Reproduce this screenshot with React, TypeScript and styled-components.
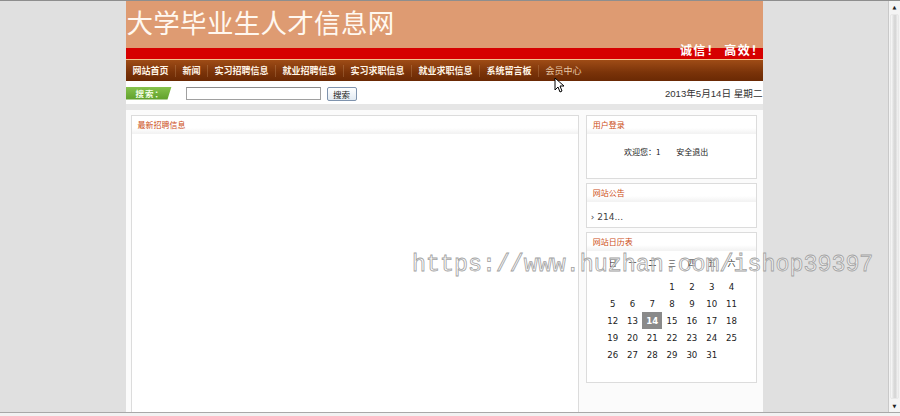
import React from "react";
import styled, { createGlobalStyle } from "styled-components";

const Global = createGlobalStyle`
  html, body { margin: 0; padding: 0; background: #e0e0e0; overflow: hidden; }
  body { font-family: "Noto Sans CJK SC", "Liberation Sans", sans-serif; }
  * { box-sizing: border-box; }
`;

const Frame = styled.div`
  position: relative;
  height: 416px;
  display: flex;
  flex-direction: column;
  border-top: 1px solid #8e8e8e;
`;

const Screen = styled.div`
  flex: 1;
  display: flex;
  min-height: 0;
`;

const Viewport = styled.div`
  flex: 1;
  display: flex;
  justify-content: center;
`;

const ScrollBar = styled.div`
  width: 12px;
  display: flex;
  flex-direction: column;
  background: #f4f4f4;
  border-left: 1px solid #c9c9c9;
`;

const ScrollArrow = styled.div`
  height: 12px;
  display: flex;
  align-items: center;
  justify-content: center;
  font-size: 5px;
  color: #222;
  font-family: "DejaVu Sans", sans-serif;
`;

const ScrollThumb = styled.div`
  flex: 1;
  margin: 1px 1px;
  background: linear-gradient(to right, #fafafa, #dcdcdc 40%, #d4d4d4 60%, #f4f4f4);
  border: 1px solid #e8e8e8;
  border-radius: 2px;
`;

const BottomEdge = styled.div`
  height: 4px;
  border-top: 1px solid #a8a8a8;
  background: #f2f2f2;
`;

const Container = styled.div`
  width: 637px;
  display: flex;
  flex-direction: column;
`;

const Header = styled.div`
  height: 58px;
  background: linear-gradient(to bottom, #de9b72 0, #de9b72 47px, #d60000 47px, #d60000 58px);
  display: flex;
  flex-direction: column;
  justify-content: space-between;
`;

const SiteTitle = styled.div`
  padding: 5px 0 0 1px;
  font-size: 26.5px;
  line-height: 32px;
  color: #fff8f0;
  letter-spacing: 0.3px;
`;

const Slogan = styled.div`
  align-self: flex-end;
  padding: 0 0 1px 0;
  margin-right: -2px;
  font-size: 12px;
  line-height: 16px;
  font-weight: bold;
  color: #fff;
  letter-spacing: 1.4px;
`;

const NavBar = styled.nav`
  height: 22px;
  padding-left: 0.5px;
  border-top: 1px solid #f2c48e;
  background: linear-gradient(to bottom, #9f4c16, #7a3309 60%, #6a2904);
  display: flex;
  align-items: center;
`;

const NavItem = styled.span<{ $light?: boolean; $first?: boolean }>`
  padding: 0 6.5px;
  font-size: 9px;
  line-height: 12px;
  font-weight: ${(p) => (p.$light ? "normal" : "bold")};
  color: ${(p) => (p.$light ? "#e9c9a8" : "#fff4e6")};
  border-left: ${(p) => (p.$first ? "none" : "1px solid rgba(255,220,180,0.18)")};
`;

const SearchRow = styled.div`
  height: 23px;
  background: #fff;
  display: flex;
  align-items: center;
`;

const SearchTag = styled.div`
  width: 46px;
  height: 13px;
  margin-top: 1px;
  background: linear-gradient(to bottom, #86c24c, #5f9f2a);
  clip-path: polygon(0 0, 100% 0, calc(100% - 4px) 100%, 0 100%);
  color: #f4ffe8;
  font-size: 8.5px;
  font-weight: bold;
  line-height: 13px;
  padding-left: 10px;
  letter-spacing: 1px;
`;

const SearchInput = styled.div`
  width: 135px;
  height: 13px;
  margin: 2px 0 0 14px;
  border: 1px solid #a0a0a0;
  border-top-color: #8a8a8a;
  background: #fff;
`;

const SearchButton = styled.div`
  width: 30px;
  height: 14px;
  margin: 3px 0 0 6px;
  border: 1px solid #7f93ad;
  border-radius: 2px;
  background: linear-gradient(to bottom, #ffffff, #e2eaf2);
  font-size: 8.5px;
  line-height: 12px;
  text-align: center;
  color: #1a1a1a;
`;

const DateText = styled.div`
  margin-left: auto;
  font-size: 9.6px;
  color: #333;
  font-family: "Liberation Sans", "Noto Sans CJK SC", sans-serif;
`;

const Body = styled.div`
  flex: 1;
  min-height: 0;
  background: #fbfbfb;
  border-top: 6px solid #e6e6e6;
  padding: 5px 6px 0 5px;
  display: flex;
  gap: 7px;
`;

const Panel = styled.div<{ $h?: number }>`
  background: #fff;
  border: 1px solid #dcdcdc;
  display: flex;
  flex-direction: column;
  ${(p) => (p.$h ? `height: ${p.$h}px;` : "")}
`;

const MainPanel = styled(Panel)`
  width: 449px;
  align-self: stretch;
  border-bottom: none;
`;

const SideColumn = styled.div`
  width: 171px;
  display: flex;
  flex-direction: column;
  gap: 4px;
`;

const PanelTitle = styled.div`
  height: 18px;
  padding-left: 6px;
  font-size: 8px;
  line-height: 17px;
  color: #cc4d16;
  background: linear-gradient(to bottom, #ffffff 0, #ffffff 12px, #f1f1f1 18px);
  border-bottom: 1px solid #f3f3f3;
`;

const LoginBody = styled.div`
  flex: 1;
  display: flex;
  justify-content: center;
  align-items: center;
  gap: 16px;
  padding: 0 10px 10px 0;
  font-size: 8px;
  color: #222;
`;

const NoticeBody = styled.div`
  flex: 1;
  display: flex;
  align-items: center;
  padding: 4px 0 0 4px;
  font-size: 9px;
  color: #444;
  font-family: "DejaVu Sans", sans-serif;
`;

const Calendar = styled.div`
  display: grid;
  grid-template-columns: repeat(7, 19.8px);
  padding: 2px 0 0 16px;
`;

const CalHead = styled.div`
  height: 18px;
  margin-bottom: 7px;
  display: flex;
  align-items: center;
  justify-content: center;
  font-size: 8px;
  color: #222;
`;

const CalCell = styled.div<{ $today?: boolean }>`
  height: 17px;
  display: flex;
  align-items: center;
  justify-content: center;
  font-family: "DejaVu Sans", sans-serif;
  font-size: 8.6px;
  color: ${(p) => (p.$today ? "#fff" : "#222")};
  font-weight: ${(p) => (p.$today ? "bold" : "normal")};
  background: ${(p) => (p.$today ? "#8a8a8a" : "transparent")};
`;

const Watermark = styled.div`
  position: absolute;
  left: 412px;
  top: 249px;
  font-family: "Liberation Mono", monospace;
  font-size: 23.3px;
  line-height: 30px;
  color: rgba(255, 255, 255, 0.55);
  -webkit-text-stroke: 0.8px #a2a2a2;
  pointer-events: none;
  white-space: nowrap;
`;

const Cursor = styled.svg`
  position: absolute;
  left: 554px;
  top: 76px;
`;

const navItems = ["网站首页", "新闻", "实习招聘信息", "就业招聘信息", "实习求职信息", "就业求职信息", "系统留言板"];
const weekDays = ["日", "一", "二", "三", "四", "五", "六"];

export default function App() {
  const cells: (number | null)[] = [null, null, null];
  for (let d = 1; d <= 31; d++) cells.push(d);

  return (
    <>
      <Global />
      <Frame>
        <Screen>
          <Viewport>
            <Container>
              <Header>
                <SiteTitle>大学毕业生人才信息网</SiteTitle>
                <Slogan>诚信！ 高效！</Slogan>
              </Header>
              <NavBar>
                {navItems.map((n, i) => (
                  <NavItem key={n} $first={i === 0}>
                    {n}
                  </NavItem>
                ))}
                <NavItem $light>会员中心</NavItem>
              </NavBar>
              <SearchRow>
                <SearchTag>搜索：</SearchTag>
                <SearchInput />
                <SearchButton>搜索</SearchButton>
                <DateText>2013年5月14日 星期二</DateText>
              </SearchRow>
              <Body>
                <MainPanel>
                  <PanelTitle>最新招聘信息</PanelTitle>
                </MainPanel>
                <SideColumn>
                  <Panel $h={64}>
                    <PanelTitle>用户登录</PanelTitle>
                    <LoginBody>
                      <span>欢迎您：1</span>
                      <span>安全退出</span>
                    </LoginBody>
                  </Panel>
                  <Panel $h={45}>
                    <PanelTitle>网站公告</PanelTitle>
                    <NoticeBody>› 214...</NoticeBody>
                  </Panel>
                  <Panel $h={151}>
                    <PanelTitle>网站日历表</PanelTitle>
                    <Calendar>
                      {weekDays.map((w) => (
                        <CalHead key={w}>{w}</CalHead>
                      ))}
                      {cells.map((c, i) => (
                        <CalCell key={i} $today={c === 14}>
                          {c ?? ""}
                        </CalCell>
                      ))}
                    </Calendar>
                  </Panel>
                </SideColumn>
              </Body>
            </Container>
          </Viewport>
          <ScrollBar>
            <ScrollArrow>▲</ScrollArrow>
            <ScrollThumb />
            <ScrollArrow>▼</ScrollArrow>
          </ScrollBar>
        </Screen>
        <BottomEdge />
        <Watermark>https://www.huzhan.com/ishop39397</Watermark>
        <Cursor width="10" height="16" viewBox="0 0 10 16">
          <path d="M1 1 L1 13 L4 10 L6 15 L8 14 L6 9 L10 9 Z" fill="#fff" stroke="#000" strokeWidth="1" />
        </Cursor>
      </Frame>
    </>
  );
}
